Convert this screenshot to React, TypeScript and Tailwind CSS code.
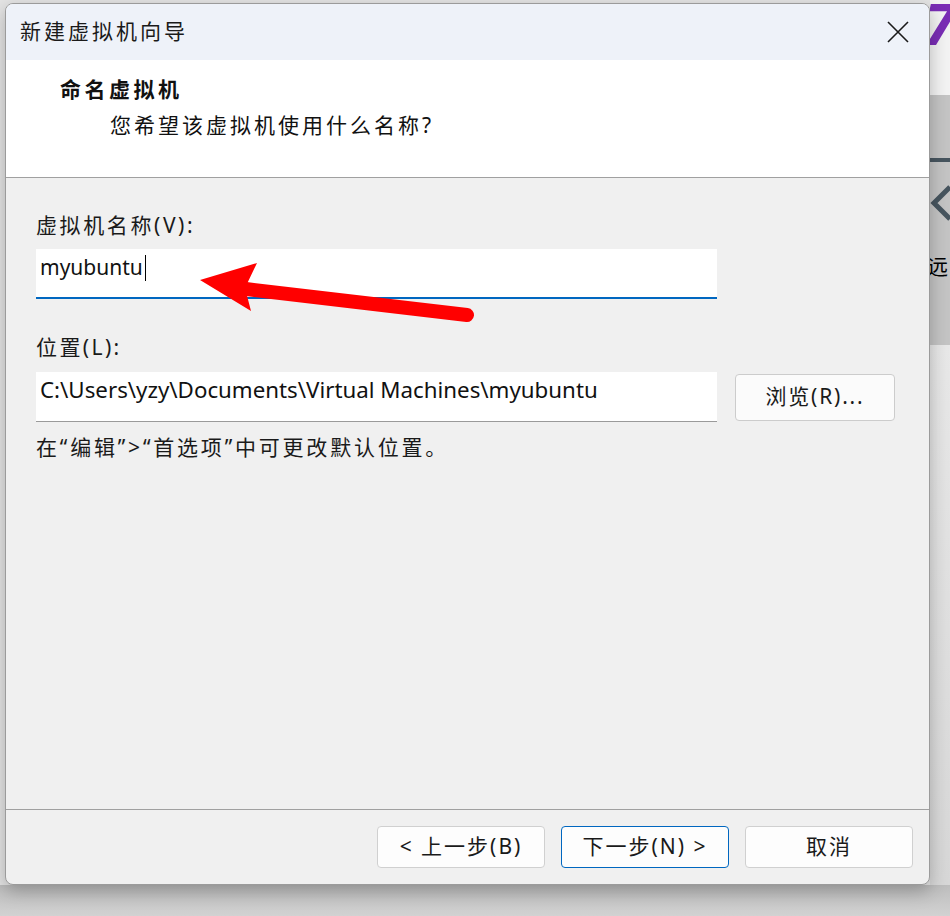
import React from "react";

const font = { fontFamily: '"Noto Sans", "Noto Sans CJK SC", sans-serif' };

function Btn({ children, primary }: { children: React.ReactNode; primary?: boolean }) {
  return (
    <button
      className={
        primary
          ? "w-[168px] h-[42px] rounded-[4px] border border-[#0067c0] bg-[#fdfdfd] text-[21px] tracking-[2px] text-[#1a1a1a] flex items-center justify-center"
          : "w-[168px] h-[42px] rounded-[4px] border border-[#d0d0d0] bg-[#fdfdfd] text-[21px] tracking-[2px] text-[#1a1a1a] flex items-center justify-center"
      }
    >
      {children}
    </button>
  );
}

export default function App() {
  return (
    <div className="relative w-[950px] h-[916px] overflow-hidden bg-[#e4e4e4]" style={font}>
      {/* background app behind the dialog */}
      <div className="absolute left-[930px] top-0 w-[20px] h-[95px] bg-[#f3f3f3] overflow-hidden">
        <span className="absolute left-[-6px] top-[-6px] text-[58px] leading-none font-bold text-[#7a2db5] italic">7</span>
      </div>
      <div className="absolute left-[930px] top-[95px] w-[20px] h-[250px] bg-[#c4c4c4] overflow-hidden">
        <div className="absolute left-0 top-[63px] w-[20px] h-[4px] bg-[#47555f]" />
        <svg className="absolute left-0 top-[88px]" width="20" height="40" viewBox="0 0 20 40">
          <path d="M20 4 L4 20 L20 36" fill="none" stroke="#47555f" strokeWidth="5" />
        </svg>
        <span className="absolute left-[-3px] top-[160px] text-[21px] leading-none text-black" style={{ fontFamily: '"Noto Sans CJK SC", sans-serif' }}>远</span>
      </div>
      <div className="absolute left-[930px] top-[345px] w-[20px] h-[571px] bg-gradient-to-b from-[#e8e8e8] to-[#d6d6d6]" />
      <div className="absolute left-0 top-[885px] w-[950px] h-[31px] bg-gradient-to-b from-[#bdbdbd] to-[#d2d2d2]" />

      {/* dialog */}
      <div className="relative pt-[3px] pl-[5px]">
        <div className="w-[925px] h-[882px] rounded-[8px] border border-[#9b9b9b] overflow-hidden flex flex-col bg-[#f0f0f0] shadow-[0_6px_18px_rgba(0,0,0,0.25)]">
          {/* title bar */}
          <div className="h-[56px] bg-[#eef2f9] flex items-center justify-between pl-[14px] pr-[20px]">
            <span className="text-[21px] tracking-[3px] text-[#1a1a1a]">新建虚拟机向导</span>
            <svg width="22" height="22" viewBox="0 0 22 22">
              <path d="M1 1 L21 21 M21 1 L1 21" stroke="#1a1a1a" strokeWidth="1.6" />
            </svg>
          </div>
          {/* header */}
          <div className="h-[118px] bg-white border-b border-[#a0a0a0] pl-[54px] pt-[15px]">
            <div className="text-[21px] leading-[28px] tracking-[3.5px] font-bold text-[#111]">命名虚拟机</div>
            <div className="mt-[8px] ml-[50px] text-[21px] leading-[28px] tracking-[3px] text-[#111]">您希望该虚拟机使用什么名称?</div>
          </div>
          {/* body */}
          <div className="flex-1 px-[30px] pt-[33px]">
            <div className="text-[21px] leading-[28px] tracking-[2.6px] text-[#1a1a1a]">虚拟机名称(V):</div>
            <div className="mt-[10px] w-[681px] h-[50px] bg-white border-b-2 border-[#0067c0] flex items-center pl-[4px] pb-[10px]">
              <span className="text-[21px] text-[#111]">myubuntu</span>
              <span className="ml-[2px] w-px h-[26px] bg-black" />
            </div>
            <div className="mt-[34px] text-[21px] leading-[28px] tracking-[2.4px] text-[#1a1a1a]">位置(L):</div>
            <div className="mt-[11px] flex items-center gap-[18px]">
              <div className="w-[681px] h-[50px] bg-white border-b border-[#9a9a9a] flex items-center pl-[4px] pb-[14px]">
                <span className="text-[22.3px] text-[#111]">C:\Users\yzy\Documents\Virtual Machines\myubuntu</span>
              </div>
              <button className="w-[160px] h-[47px] rounded-[4px] border border-[#cccccc] bg-[#fbfbfb] text-[21px] tracking-[1.8px] text-[#1a1a1a] flex items-center justify-center">
                浏览(R)...
              </button>
            </div>
            <div className="mt-[11px] text-[21px] leading-[28px] tracking-[2.8px] text-[#1a1a1a]">在“编辑”&gt;“首选项”中可更改默认位置。</div>
          </div>
          {/* footer */}
          <div className="h-[75px] border-t border-[#a0a0a0] flex justify-end gap-[16px] pt-[16px] pr-[16px]">
            <Btn>&lt; 上一步(B)</Btn>
            <Btn primary>下一步(N) &gt;</Btn>
            <Btn>取消</Btn>
          </div>
        </div>
      </div>

      {/* red annotation arrow */}
      <svg className="absolute left-0 top-0 pointer-events-none" width="950" height="916" viewBox="0 0 950 916">
        <line x1="246" y1="289" x2="467" y2="315" stroke="#ff0000" strokeWidth="14" strokeLinecap="round" />
        <polygon points="200,280 257,263 245,288 251,311" fill="#ff0000" />
      </svg>
    </div>
  );
}
